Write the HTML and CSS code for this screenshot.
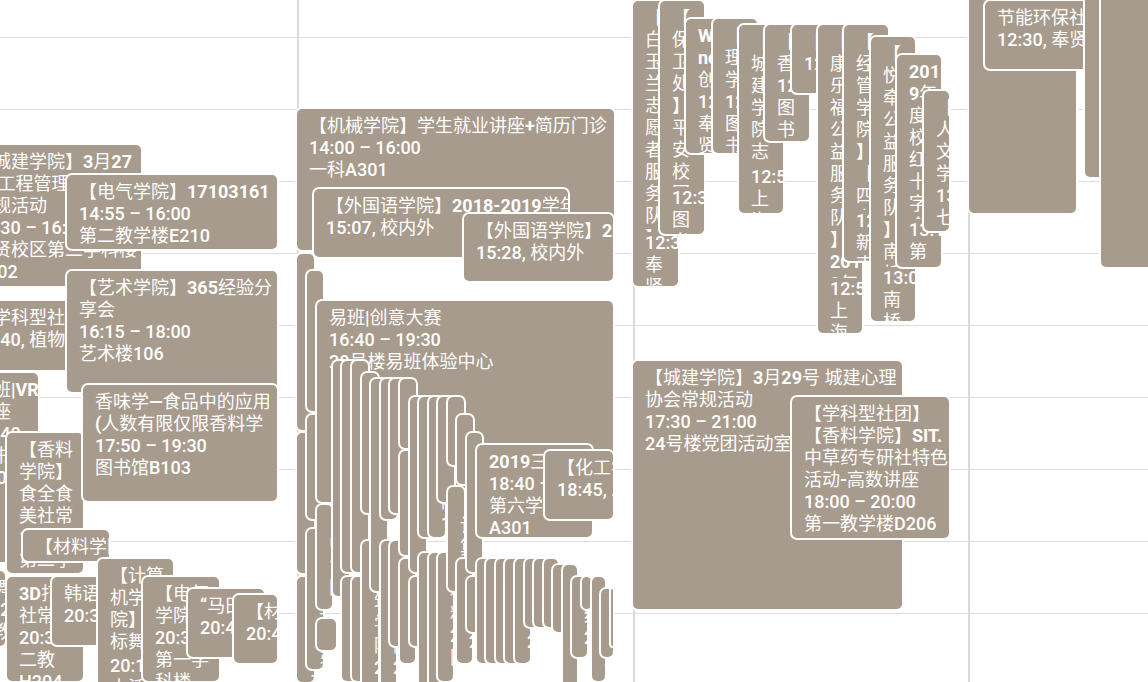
FILE: index.html
```html
<!DOCTYPE html>
<html lang="zh-CN">
<head>
<meta charset="utf-8">
<title>校园活动日历</title>
<link rel="stylesheet" href="styles.css">
</head>
<body>
<main class="calendar">
  <section class="day" aria-label="3月27日"></section>
  <section class="day" aria-label="3月28日"></section>
  <section class="day" aria-label="3月29日"></section>
  <section class="day" aria-label="3月30日"></section>
</main>
<script src="events.js"></script>
</body>
</html>
```
FILE: styles.css
```css
* { box-sizing: border-box; }

body {
  margin: 0;
  background: #fff;
  font-family: Roboto, "Noto Sans CJK SC", sans-serif;
  font-size: 18px;
  line-height: 22px;
}

.calendar {
  display: grid;
  grid-template-columns: 297fr 336fr 335fr 180fr;
  height: 100vh;
  overflow: hidden;
  background: linear-gradient(#dddddd 1px, transparent 1px) 0 37px / 100% 72px;
}

.day {
  position: relative;
  min-width: 0;
}

.day + .day { box-shadow: inset 2px 0 #dadada; }

/* Events sit on the day's time canvas; later ones overlap earlier ones. */
.event {
  position: absolute;
  left: calc(var(--x) * 100% / var(--span));
  top: calc(var(--y) * 1px);
  width: calc(var(--w) * 100% / var(--span));
  height: calc(var(--h) * 1px);
  display: flex;
  flex-direction: column;
  align-items: flex-start;
  justify-content: flex-start;
  padding: 6px 0 0;
  overflow: hidden;
  border: 0;
  border-radius: 5px;
  background: #a79b8e;
  box-shadow: 0 0 0 2px #fffefc;
  color: #fffefc;
  font: inherit;
  text-align: left;
  white-space: pre;
  text-spacing-trim: space-all;
  cursor: pointer;
}

.event.open {
  border-radius: 5px 0 0 5px;
}

.title,
.detail {
  flex: none;
  padding-left: 12px;
  overflow: hidden;
}

.title.cut { height: calc(var(--cut) * 1px); }

.title b { font-weight: 700; }

.detail span { font-weight: 500; }
```
FILE: events.js
```js
// Each event: [left, top, right, bottom, title, detail, visible title height]
const days = [
  { start: 0, span: 297, events: [
    [-37, 145, 141, 286, '【城建学院】3月27\n号 工程管理\n常规活动', '14:30 – 16:30\n奉贤校区第二学科楼\nA302'],
    [-37, 301, 200, 370, '【学科型社团】', '16:40, 植物园'],
    [67, 175, 277, 249, '【电气学院】17103161', '14:55 – 16:00\n第二教学楼E210'],
    [67, 271, 277, 392, '【艺术学院】365经验分\n享会', '16:15 – 18:00\n艺术楼106'],
    [-37, 373, 38, 562, '易班|VR\n讲座', '17:40\n图书\nB103'],
    [7, 433, 83, 573, '【香料\n学院】\n食全食\n美社常', '18:20\n第二学'],
    [83, 385, 277, 501, '香味学—食品中的应用\n(人数有限仅限香料学', '17:50 – 19:30\n图书馆B103'],
    [23, 530, 109, 561, '【材料学院】', ''],
    [-37, 571, 5, 646, '标舞', '20:2\n二教'],
    [7, 577, 83, 681, '3D打\n社常', '20:30\n二教\nH204'],
    [52, 577, 110, 645, '韩语角', '20:30'],
    [98, 559, 173, 700, '【计算\n机学\n院】\n标舞', '20:15\n大活', 90],
    [143, 577, 219, 681, '【电气\n学院】', '20:30\n第一学\n科楼'],
    [188, 589, 264, 657, '“马田', '20:40'],
    [234, 595, 277, 663, '【材料', '20:45'],
  ] },
  { start: 297, span: 336, events: [
    [297, 109, 614, 250, '【机械学院】学生就业讲座+简历门诊', '14:00 – 16:00\n一科A301'],
    [314, 189, 568, 257, '【外国语学院】2018-2019学年', '15:07, 校内外'],
    [464, 214, 613, 281, '【外国语学院】2018', '15:28, 校内外'],
    [297, 254, 314, 430], [297, 433, 314, 573], [297, 577, 314, 682, '【\n食\n品', '20:\n二'],
    [307, 271, 323, 411], [307, 415, 323, 519], [307, 529, 323, 669, '【\n香\n料\n学', '19:\n第'],
    [317, 301, 613, 502, '易班|创意大赛', '16:40 – 19:30\n28号楼易班体验中心'],
    [317, 505, 332, 609, '【\n中', '19:\n图'], [317, 619, 336, 650],
    [333, 361, 349, 596], [342, 361, 358, 572], [342, 577, 358, 681],
    [352, 361, 368, 572], [352, 577, 368, 681],
    [362, 373, 378, 513], [362, 541, 378, 700, '【\n建\n筑\n学\n院', '20:'],
    [371, 379, 387, 591], [381, 379, 397, 519], [381, 541, 396, 700, '【\n化\n工\n学\n院', '20:'],
    [390, 379, 406, 513], [390, 541, 406, 646],
    [400, 379, 416, 448], [400, 451, 416, 555], [400, 559, 415, 663],
    [410, 397, 426, 572], [410, 577, 425, 646],
    [419, 397, 435, 537], [419, 553, 435, 700],
    [429, 397, 445, 537, '【\n电\n气\n学\n院', '18:'], [429, 553, 445, 700],
    [438, 397, 454, 502], [438, 553, 453, 681, '【\n材\n料', '20:\n图'],
    [448, 397, 464, 465], [448, 487, 464, 591, '【\n计\n算', '19:'],
    [457, 415, 473, 484], [457, 559, 472, 663, '【\n人\n文', '20:'],
    [467, 433, 482, 572], [467, 577, 482, 632],
    [477, 445, 592, 537, '2019三月', '18:40 – 20:00\n第六学科楼\nA301'],
    [545, 451, 613, 519, '【化工学院】', '18:45, 二教'],
    [477, 559, 492, 663], [486, 559, 502, 663], [496, 559, 511, 663],
    [505, 559, 521, 663], [515, 559, 530, 663, '【\n城\n建', '20:'],
    [525, 559, 540, 627], [534, 559, 549, 627], [544, 559, 558, 627],
    [553, 565, 568, 632], [563, 565, 577, 700],
    [572, 577, 587, 657, '【\n经', '20:'], [582, 577, 591, 609],
    [592, 577, 605, 681, '【\n艺\n术', '20:'], [601, 589, 613, 657], [611, 589, 613, 646],
  ] },
  { start: 633, span: 335, events: [
    [633, 1, 678, 286, '【\n白\n玉\n兰\n志\n愿\n者\n服\n务\n队\n】', '12:30\n奉\n贤', 225],
    [660, 1, 704, 234, '【\n保\n卫\n处\n】\n平\n安\n校\n园', '12:30\n图\n书', 180],
    [686, 19, 730, 153, 'We\nnd\n创', '12:40\n奉\n贤'],
    [713, 19, 757, 153, '【\n理\n学', '12:45\n图\n书'],
    [739, 25, 783, 213, '【\n城\n建\n学\n院\n志', '12:50\n上\n海', 135],
    [765, 25, 809, 141, '【\n香', '12:50\n图\n书'],
    [792, 25, 836, 93, '【', '12:50'],
    [818, 25, 862, 333, '【\n康\n乐\n福\n公\n益\n服\n务\n队\n】\n201\n9年', '12:50\n上\n海', 247],
    [844, 25, 888, 261, '【\n经\n管\n学\n院\n】\n【\n四\n六', '12:50\n新\n南', 179],
    [871, 37, 915, 321, '【\n悦\n牵\n公\n益\n服\n务\n队\n】\n南\n桥', '13:00\n南\n桥', 224],
    [897, 55, 941, 267, '201\n9年\n度\n校\n红\n十\n字\n会', '13:15\n第\n一', 158],
    [924, 91, 949, 231, '【\n人\n文\n学', '13:40\n七'],
    [633, 361, 902, 609, '【城建学院】3月29号 城建心理\n协会常规活动', '17:30 – 21:00\n24号楼党团活动室'],
    [792, 397, 949, 538, '【学科型社团】\n【香料学院】SIT.\n中草药专研社特色\n活动-高数讲座', '18:00 – 20:00\n第一教学楼D206'],
  ] },
  { start: 968, span: 180, events: [
    [969, -20, 1076, 213],
    [985, 1, 1160, 69, '节能环保社团', '12:30, 奉贤校区'],
    [1085, -20, 1160, 177],
    [1101, -20, 1170, 267],
  ] },
];

// Wraps runs of Latin letters and digits so they can carry their own weight.
function fill(node, text, tag) {
  for (const part of text.split(/([0-9A-Za-z:.,+()–\-—“|]+)/)) {
    if (/^[0-9A-Za-z:.,+()–\-—“|]/.test(part)) {
      const run = document.createElement(tag);
      run.textContent = part;
      node.append(run);
    } else {
      node.append(part);
    }
  }
}

document.querySelectorAll('.day').forEach((day, i) => {
  const { start, span, events } = days[i];
  day.style.setProperty('--span', span);
  for (const [left, top, right, bottom, title, detail, cut] of events) {
    const event = document.createElement('button');
    event.type = 'button';
    event.className = right - left < 3 ? 'event open' : 'event';
    event.style.cssText = `--x:${left - start};--y:${top};--w:${right - left};--h:${bottom - top}`;
    if (title) {
      const heading = document.createElement('div');
      heading.className = 'title';
      if (cut) {
        heading.classList.add('cut');
        heading.style.setProperty('--cut', cut);
      }
      fill(heading, title, 'b');
      event.append(heading);
    } else {
      event.setAttribute('aria-label', '活动');
    }
    if (detail) {
      const info = document.createElement('div');
      info.className = 'detail';
      fill(info, detail, 'span');
      event.append(info);
    }
    day.append(event);
  }
});
```
